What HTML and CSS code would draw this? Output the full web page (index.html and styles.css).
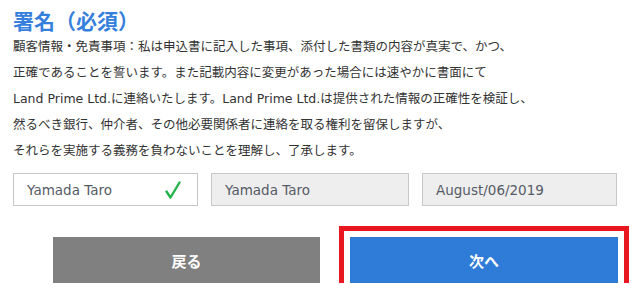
FILE: index.html
```html
<!doctype html>
<html lang="ja">
    <head>
        <meta charset="utf-8">
        <title>署名</title>
        <link rel="stylesheet" href="styles.css">
    </head>
    <body>
        <div class="sign">
            <h2 class="sign__title">署名（必須）</h2>
            <p class="sign__text">
                顧客情報・免責事項：私は申込書に記入した事項、添付した書類の内容が真実で、かつ、<br>
                正確であることを誓います。また記載内容に変更があった場合には速やかに書面にて<br>
                Land Prime Ltd.に連絡いたします。Land Prime Ltd.は提供された情報の正確性を検証し、<br>
                然るべき銀行、仲介者、その他必要関係者に連絡を取る権利を留保しますが、<br>
                それらを実施する義務を負わないことを理解し、了承します。
            </p>
            <div class="sign__fields">
                <div class="sign__field sign__field--ok">
                    <span>Yamada Taro</span>
                    <svg class="sign__check" width="16" height="18" viewBox="0 0 16 18">
                        <path d="M1.5 10.5 L5.5 16.5 L14.5 1.5" fill="none" stroke="#24b24a" stroke-width="2.4" stroke-linecap="round" stroke-linejoin="round"/>
                    </svg>
                </div>
                <div class="sign__field sign__field--off">Yamada Taro</div>
                <div class="sign__field sign__field--off">August/06/2019</div>
            </div>
            <div class="sign__buttons">
                <div class="sign__btn sign__btn-back">戻る</div>
                <div class="sign__btn sign__btn-next">次へ</div>
            </div>
        </div>
    </body>
</html>
```

FILE: styles.css
```css
body {
    background: #fff;
    margin: 0;
}

.sign {
    font-family: "DejaVu Sans", "Noto Sans CJK JP", sans-serif;
    padding: 6px 13px 0;
    color: #333;
}

.sign__title {
    color: #3580dc;
    font-family: "Noto Sans CJK JP", sans-serif;
    font-size: 21px;
    font-weight: bold;
    line-height: 28px;
    margin: 0;
}

.sign__text {
    font-size: 12.5px;
    line-height: 26px;
    margin: 0 0 9px;
    white-space: nowrap;
}

.sign__fields {
    display: grid;
    grid-template-columns: 185px 198px 195px;
    gap: 13px;
}

.sign__field {
    align-items: center;
    border: 1px solid #c8c8c8;
    box-sizing: border-box;
    color: #555b66;
    display: flex;
    font-size: 13.5px;
    height: 33px;
    justify-content: space-between;
    padding: 0 16px 0 13px;
}

.sign__field--off {
    background: #eeeeee;
}

.sign__check {
    display: block;
}

.sign__buttons {
    display: flex;
    gap: 30px;
    margin-top: 31px;
    padding-left: 40px;
}

.sign__btn {
    align-items: center;
    color: #fff;
    display: flex;
    font-family: "Noto Sans CJK JP", sans-serif;
    font-size: 15px;
    font-weight: bold;
    height: 46px;
    justify-content: center;
    width: 268px;
}

.sign__btn-back {
    background: #808080;
    width: 267px;
}

.sign__btn-next {
    background: #2f7bd8;
    outline: 5px solid #e8161f;
    outline-offset: 6px;
}
```
